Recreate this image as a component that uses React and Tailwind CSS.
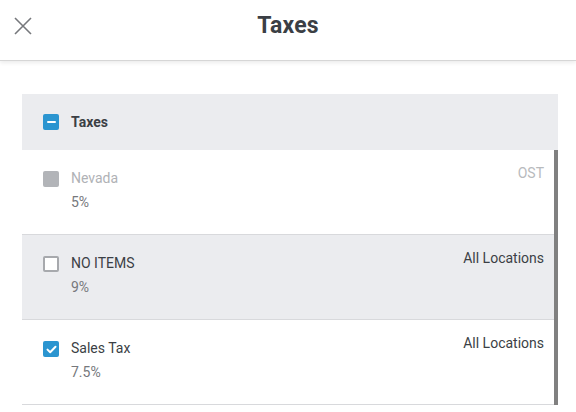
import React from 'react';

const ROWS = [
  { name: 'Nevada', pct: '5%', loc: 'OST', state: 'disabled', bg: 'bg-white' },
  { name: 'NO ITEMS', pct: '9%', loc: 'All Locations', state: 'off', bg: 'bg-[#ebecef]' },
  { name: 'Sales Tax', pct: '7.5%', loc: 'All Locations', state: 'on', bg: 'bg-white' },
];

function Box({ state }) {
  if (state === 'disabled') {
    return <div className="w-4 h-4 rounded-[2px] bg-[#b2b4b8]" />;
  }
  if (state === 'off') {
    return <div className="w-4 h-4 rounded-[2px] border-2 border-[#a7a9ad] bg-white" />;
  }
  if (state === 'mixed') {
    return (
      <div className="w-4 h-4 rounded-[2px] bg-[#2b95d0] flex items-center justify-center">
        <div className="w-[9px] h-[2.5px] bg-white rounded-[1px]" />
      </div>
    );
  }
  return (
    <div className="w-4 h-4 rounded-[2px] bg-[#2b95d0] flex items-center justify-center">
      <svg width="11" height="9" viewBox="0 0 11 9" fill="none">
        <path d="M1.5 4.6 L4.2 7.2 L9.5 1.8" stroke="white" strokeWidth="2" strokeLinecap="round" strokeLinejoin="round" />
      </svg>
    </div>
  );
}

export default function App() {
  return (
    <div className="w-[576px] h-[412px] bg-white overflow-hidden" style={{ fontFamily: 'Roboto, "Noto Sans", sans-serif' }}>
      {/* Top bar */}
      <div className="relative h-[61px] flex items-center justify-center border-b border-[#d6d6d6] shadow-[0_2px_4px_rgba(0,0,0,0.08)]">
        <button className="absolute left-[14px] top-[17px] w-[18px] h-[18px]">
          <svg width="18" height="18" viewBox="0 0 18 18">
            <path d="M1 1 L17 17 M17 1 L1 17" stroke="#76787c" strokeWidth="1.6" />
          </svg>
        </button>
        <div className="text-[23px] font-bold text-[#3b3f45] -mt-[8px] tracking-[0.2px]">Taxes</div>
      </div>

      {/* Panel */}
      <div className="mt-[33px] ml-[22px] w-[536px]">
        <div className="h-[56px] bg-[#ebecef] flex items-center pl-[21px] gap-[12px]">
          <Box state="mixed" />
          <span className="text-[14px] font-bold text-[#3b3f45]">Taxes</span>
        </div>
        <div className="flex">
          <div className="flex-1">
            {ROWS.map((r) => (
              <div key={r.name} className={`h-[85px] ${r.bg} border-b border-[#d8d9dc] flex pl-[21px] pr-[10px] pt-[20px]`}>
                <div className="pt-[1px]">
                  <Box state={r.state} />
                </div>
                <div className="ml-[12px] flex-1">
                  <div className={`text-[14px] leading-[17px] ${r.state === 'disabled' ? 'text-[#b0b2b6]' : 'text-[#3b3f45]'}`}>{r.name}</div>
                  <div className="text-[14px] leading-[17px] mt-[7px] text-[#76787c]">{r.pct}</div>
                </div>
                <div className={`text-[14px] leading-[17px] -mt-[5px] ${r.state === 'disabled' ? 'text-[#b8babd]' : 'text-[#3b3f45]'}`}>{r.loc}</div>
              </div>
            ))}
          </div>
          <div className="w-[4px] bg-[#808080]" />
        </div>
      </div>
    </div>
  );
}
